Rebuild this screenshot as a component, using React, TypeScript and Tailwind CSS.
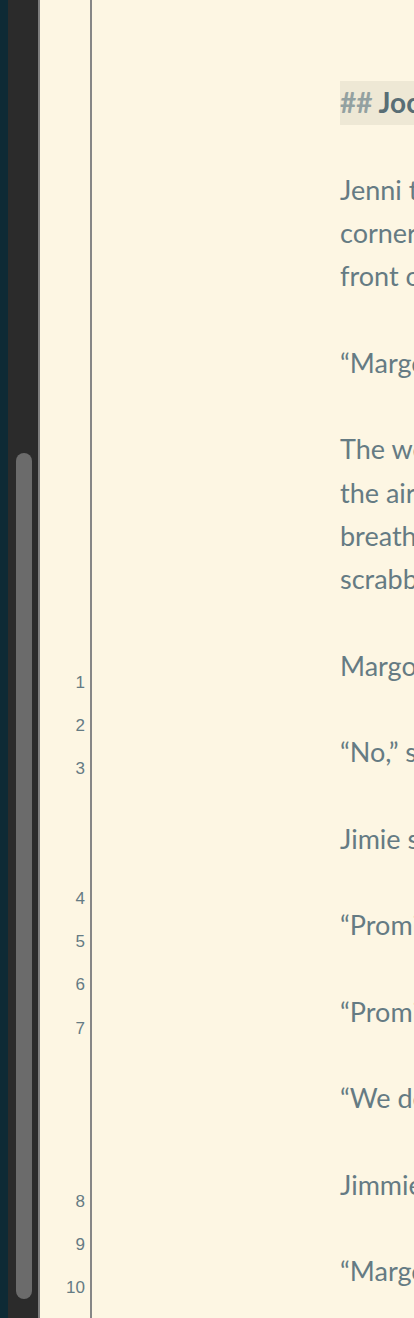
import React from "react";

const lines: (string | null)[] = [
  "Jenni took the long way around the block, past the",
  "corner store with its flickering sign, and stopped in",
  "front of the house where Margo used to live.",
  null,
  "“Margo?” she called, though she knew better.",
  null,
  "The wooden porch sagged under her weight and",
  "the air smelled of rain and cut grass. She held her",
  "breath and listened for the dog that used to come",
  "scrabbling to the door whenever anyone knocked.",
  null,
  "Margo opened the door before she could knock again.",
  null,
  "“No,” said Margo. “Not today. Not like this.”",
  null,
  "Jimie stood behind her, hands jammed in his pockets.",
  null,
  "“Promise me you won’t tell anyone,” Jenni said.",
  null,
  "“Promise me you won’t come back,” Margo answered.",
  null,
  "“We don’t have to do this,” Jimie said quietly.",
  null,
  "Jimmie looked at the two of them and said nothing.",
  null,
  "“Margo, please,” Jenni whispered.",
];

const gutter: (number | null)[] = [1, 2, 3, null, null, 4, 5, 6, 7, null, null, null, 8, 9, 10];

export default function App() {
  return (
    <div className="flex h-[1318px] w-[414px] overflow-hidden bg-[#fdf6e3]">
      <div className="w-[8px] shrink-0 bg-[#0e2a35]" />
      <div className="flex w-[30px] shrink-0 flex-col bg-[#2b2b2b] pb-[19px] pl-[8px] pr-[6px] pt-[453px]">
        <div className="flex-1 rounded-full bg-[#6b6b6b]" />
      </div>
      <div className="w-[2px] shrink-0 bg-[#7d7d7d]" />
      <div
        className="flex w-[50px] shrink-0 flex-col items-end pr-[5px] pt-[660.6px] text-[17px] text-[#657b83]"
        style={{ fontFamily: '"Liberation Sans", Arial, sans-serif' }}
      >
        {gutter.map((n, i) => (
          <div key={i} className="h-[43.25px] leading-[43.25px]">
            {n ?? ""}
          </div>
        ))}
      </div>
      <div className="w-[2px] shrink-0 bg-[#868686]" />
      <div
        className="flex-1 overflow-hidden whitespace-nowrap pl-[248px] pt-[81.4px] text-[27px] leading-[43.25px] text-[#657b83]"
        style={{ fontFamily: "Lato, sans-serif" }}
      >
        <div className="h-[43.25px] bg-[#eee8d5] text-[28px] font-bold">
          <span className="text-[#93a1a1]">##</span>{" "}
          <span className="text-[#586e75]">Jocelyn</span>
        </div>
        <div className="h-[43.25px]" />
        {lines.map((l, i) => (
          <div key={i} className="h-[43.25px]">
            {l ?? ""}
          </div>
        ))}
      </div>
    </div>
  );
}
